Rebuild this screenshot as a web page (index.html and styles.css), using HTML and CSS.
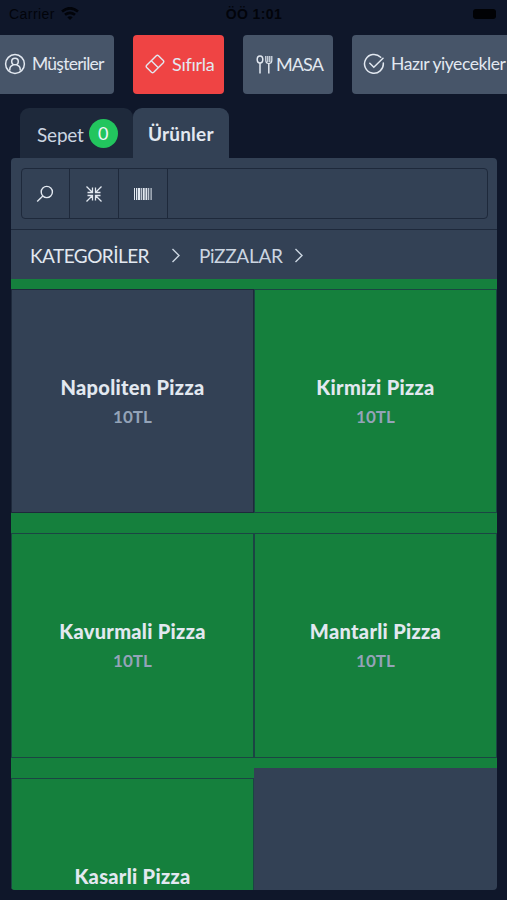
FILE: index.html
```html
<!DOCTYPE html>
<html lang="tr">
<head>
<meta charset="utf-8">
<meta name="viewport" content="width=device-width">
<title>Ürünler</title>
<link rel="stylesheet" href="styles.css">
</head>
<body>
<div class="status">
  <div class="carrier"><span>Carrier</span>
    <svg width="18" height="13" viewBox="0 0 18 13" fill="none" stroke="currentColor" stroke-width="2.7"><path d="M1 4.5Q9-2 17 4.5M4 7.8q5-4 10 0"/><path d="M6.3 10.2q2.7-2 5.4 0L9 13z" fill="currentColor" stroke="none"/></svg>
  </div>
  <span class="clock">ÖÖ 1:01</span>
  <span class="battery"></span>
</div>
<nav class="actions">
  <button class="action customers">
    <svg width="22" height="22" viewBox="0 0 22 22" fill="none" stroke="currentColor" stroke-width="1.5"><circle cx="11" cy="11" r="9.4"/><circle cx="11" cy="8.5" r="3.3"/><path d="M5.8 17.5v-1.2q0-3.5 3.6-4.4M16.2 17.5v-1.2q0-3.5-3.6-4.4"/></svg>
    <span>Müşteriler</span>
  </button>
  <button class="action reset">
    <svg width="20" height="20" viewBox="0 0 20 20" fill="none" stroke="currentColor" stroke-width="1.4" stroke-linejoin="round"><path d="M1.7 11.3 11.3 1.7q1.1-1 2.2 0l4.8 4.8q1 1.1 0 2.2l-9.6 9.6q-1.1 1-2.2 0l-4.8-4.8q-1-1.1 0-2.2zM6.3 6.7l7 7"/></svg>
    <span>Sıfırla</span>
  </button>
  <button class="action table">
    <svg width="17" height="19" viewBox="0 0 17 19" fill="none" stroke="currentColor" stroke-width="1.5"><ellipse cx="4" cy="4.5" rx="2.8" ry="3.5"/><path d="M4 8v10.5M12.8 8v10.5"/><path d="M9.8 1v4.5q0 3 3 3t3-3V1M11.8 1v6M13.8 1v6" stroke-width="1.2"/></svg>
    <span>MASA</span>
  </button>
  <button class="action ready">
    <svg width="22" height="22" viewBox="0 0 22 22" fill="none" stroke="currentColor" stroke-width="1.5" stroke-linecap="round"><path d="M17.7 4.3A9.4 9.4 0 1 0 20.3 10M6.8 10.2l4 4L20 5.3"/></svg>
    <span>Hazır yiyecekler</span>
  </button>
</nav>
<div class="tabs">
  <div class="tab cart"><span>Sepet</span><b class="count">0</b></div>
  <div class="tab active"><span>Ürünler</span></div>
</div>
<main class="panel">
  <div class="toolbar">
    <div class="group">
      <div class="tool"><svg width="18" height="18" viewBox="0 0 18 18" fill="none" stroke="currentColor" stroke-width="1.4"><circle cx="10.8" cy="7" r="5.6"/><path d="m6.8 11-5.6 5.4"/></svg></div>
      <div class="tool"><svg width="16" height="16" viewBox="0 0 16 16" fill="none" stroke="currentColor" stroke-width="1.3"><path d="m.5.5 5.5 5.5M6.5 1.5v5h-5M15.5.5 10 6M9.5 1.5v5h5M.5 15.5 6 10M6.5 14.5v-5h-5M15.5 15.5 10 10M9.5 14.5v-5h5"/></svg></div>
      <div class="tool"><svg width="18" height="12" viewBox="0 0 18 12" fill="currentColor"><path d="M0 0h1v12H0zM2 0h1v12H2zM3.7 0h2.6v12H3.7zM7.2 0h1v12h-1zM9 0h1.7v12H9zM11.5 0h1.8v12h-1.8zM14.2 0h1v12h-1zM16.6 0h1v12h-1z"/></svg></div>
      <div class="field"></div>
    </div>
  </div>
  <div class="crumbs">
    <span class="root">KATEGORİLER</span>
    <svg class="chev" width="10" height="15" viewBox="0 0 10 15" fill="none" stroke="currentColor" stroke-width="1.4"><path d="m1.5 1 6.5 6.5L1.5 14"/></svg>
    <span class="current">PiZZALAR</span>
    <svg class="chev last" width="10" height="15" viewBox="0 0 10 15" fill="none" stroke="currentColor" stroke-width="1.4"><path d="m1.5 1 6.5 6.5L1.5 14"/></svg>
  </div>
  <div class="grid">
    <div class="cell"><div class="card plain"><h2>Napoliten Pizza</h2><p>10TL</p></div></div>
    <div class="cell"><div class="card"><h2>Kirmizi Pizza</h2><p>10TL</p></div></div>
    <div class="cell"><div class="card"><h2>Kavurmali Pizza</h2><p>10TL</p></div></div>
    <div class="cell"><div class="card"><h2>Mantarli Pizza</h2><p>10TL</p></div></div>
    <div class="cell"><div class="card"><h2>Kasarli Pizza</h2></div></div>
  </div>
</main>
</body>
</html>
```
FILE: styles.css
```css
* { box-sizing: border-box; margin: 0; }
body {
  width: 507px; height: 900px; overflow: hidden;
  background: #0f172a; color: #e2e8f0;
  font: 19px/24px Lato, sans-serif;
}
svg { flex: none; display: block; }
span, h2, p { white-space: nowrap; }
.status {
  height: 35px; padding: 1px 11px 9px 9px;
  display: grid; grid-template-columns: 1fr auto 1fr; align-items: center;
  color: #02040a; font: 14px/20px "Liberation Sans", sans-serif;
}
.carrier { display: flex; align-items: center; gap: 6px; letter-spacing: .45px; }
.clock { padding-left: 3px; font-weight: 700; font-size: 14px; letter-spacing: .4px; }
.battery { justify-self: end; width: 23px; height: 10px; border-radius: 3px; background: #010205; }
.actions { display: flex; gap: 19px; height: 59px; }
.action {
  flex: none; display: flex; align-items: center; height: 59px; padding: 0 0 1px;
  border: 0; border-radius: 4px; background: #475569; color: #e2e8f0;
  font: 18px/24px Lato, sans-serif;
}
.customers { width: 114px; padding-left: 4px; gap: 6px; border-radius: 0 4px 4px 0; font-size: 17.5px; letter-spacing: -.75px; }
.reset { width: 91px; padding-left: 12px; gap: 7px; background: #ef4444; letter-spacing: -.3px; }
.table { width: 90px; padding-left: 13px; gap: 3px; letter-spacing: -.9px; }
.ready { width: 176px; padding-left: 11px; gap: 6px; font-size: 17.5px; letter-spacing: -.43px; }
.tabs { display: flex; height: 50px; margin: 14px 0 0 20px; }
.tab { display: flex; align-items: center; border-radius: 9px 9px 0 0; background: #1e293b; }
.cart { width: 113px; padding: 3px 0 0 17px; gap: 5px; color: #cbd5e1; letter-spacing: -.2px; }
.count {
  width: 29px; height: 29px; margin-top: -2px; border-radius: 50%;
  background: #22c55e; color: #f1f5f9; text-align: center; font: 18px/28px Lato, sans-serif;
}
.active { width: 96px; padding: 1px 0 0 15px; background: #334155; font-weight: 700; letter-spacing: .2px; }
.panel {
  width: 486px; height: 732px; margin-left: 11px; overflow: hidden;
  border-radius: 4px; background: #334155;
}
.toolbar { height: 72px; padding: 10px 9px 10px 10px; border-bottom: 1px solid #1e293b; }
.group { display: flex; height: 51px; border: 1px solid #1e293b; border-radius: 4px; }
.tool { width: 49px; border-right: 1px solid #1e293b; display: grid; place-items: center; }
.tool:first-child { width: 48px; padding-right: 1px; }
.field { flex: 1; }
.crumbs { display: flex; align-items: center; height: 49px; padding: 2px 0 0 19px; }
.root { letter-spacing: -.55px; }
.chev { color: #cbd5e1; margin: 0 18px 1px 22px; }
.last { margin-left: 11px; }
.current { color: #cbd5e1; letter-spacing: -.3px; }
.grid { display: grid; grid-template-columns: 243px 243px; grid-auto-rows: 244.4px; }
.cell { padding: 10px 0; background: #15803d; }
.card {
  height: 224.4px; border: 1px solid #1b4543; padding-top: 85px;
  display: flex; flex-direction: column; align-items: center; gap: 6px;
}
.plain { background: #334155; border-color: #1e293b; }
h2 { font: 900 20px/24px Lato, sans-serif; letter-spacing: .3px; }
p { font: 700 17px/24px Lato, sans-serif; color: #94a3b8; }
```
